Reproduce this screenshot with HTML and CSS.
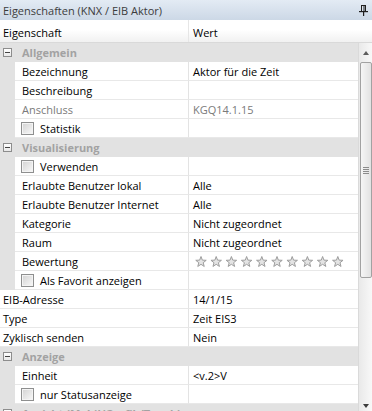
FILE: index.html
```html
<!DOCTYPE html>
<html lang="de">
<head>
  <meta charset="UTF-8" />
  <title>Eigenschaften</title>
  <link rel="stylesheet" href="styles.css">
</head>
<body>
  <div class="panel">
    <div class="titlebar">
      <span>Eigenschaften (KNX / EIB Aktor)</span>
      <svg class="pin" width="9" height="11" viewBox="0 0 9 11">
        <rect x="2.5" y="0.5" width="4" height="6" fill="none" stroke="#1e1e1e"/>
        <rect x="4.5" y="1" width="1" height="5" fill="#1e1e1e"/>
        <rect x="0" y="6" width="9" height="1.2" fill="#1e1e1e"/>
        <rect x="4" y="7" width="1.2" height="4" fill="#1e1e1e"/>
      </svg>
    </div>
    <div class="head">
      <div class="c1">Eigenschaft</div>
      <div class="c2">Wert</div>
    </div>
    <div class="body">
      <div class="grid">
        <div class="group"><span class="tog"></span>Allgemein</div>
        <div class="row sub"><div class="c1">Bezeichnung</div><div class="c2">Aktor für die Zeit</div></div>
        <div class="row sub"><div class="c1">Beschreibung</div><div class="c2"></div></div>
        <div class="row sub off"><div class="c1">Anschluss</div><div class="c2">KGQ14.1.15</div></div>
        <div class="row sub"><div class="c1"><span class="check"></span>Statistik</div><div class="c2"></div></div>

        <div class="group"><span class="tog"></span>Visualisierung</div>
        <div class="row sub"><div class="c1"><span class="check"></span>Verwenden</div><div class="c2"></div></div>
        <div class="row sub"><div class="c1">Erlaubte Benutzer lokal</div><div class="c2">Alle</div></div>
        <div class="row sub"><div class="c1">Erlaubte Benutzer Internet</div><div class="c2">Alle</div></div>
        <div class="row sub"><div class="c1">Kategorie</div><div class="c2">Nicht zugeordnet</div></div>
        <div class="row sub"><div class="c1">Raum</div><div class="c2">Nicht zugeordnet</div></div>
        <div class="row sub"><div class="c1">Bewertung</div>
          <div class="c2">
            <svg class="stars" width="152" height="13" viewBox="0 0 152 13">
              <defs>
                <path id="star" d="M0,-5.5 L1.35,-1.86 L5.23,-1.7 L2.19,0.71 L3.23,4.45 L0,2.3 L-3.23,4.45 L-2.19,0.71 L-5.23,-1.7 L-1.35,-1.86 Z" fill="#e4e4e4" stroke="#9d9d9d" stroke-width="1" stroke-linejoin="round"/>
              </defs>
              <use href="#star" x="8" y="7"/>
              <use href="#star" x="23.2" y="7"/>
              <use href="#star" x="38.4" y="7"/>
              <use href="#star" x="53.6" y="7"/>
              <use href="#star" x="68.8" y="7"/>
              <use href="#star" x="84" y="7"/>
              <use href="#star" x="99.2" y="7"/>
              <use href="#star" x="114.4" y="7"/>
              <use href="#star" x="129.6" y="7"/>
              <use href="#star" x="144.8" y="7"/>
            </svg>
          </div>
        </div>
        <div class="row sub"><div class="c1"><span class="check"></span>Als Favorit anzeigen</div><div class="c2"></div></div>

        <div class="row"><div class="c1">EIB-Adresse</div><div class="c2">14/1/15</div></div>
        <div class="row"><div class="c1">Type</div><div class="c2">Zeit EIS3</div></div>
        <div class="row"><div class="c1">Zyklisch senden</div><div class="c2">Nein</div></div>

        <div class="group"><span class="tog"></span>Anzeige</div>
        <div class="row sub"><div class="c1">Einheit</div><div class="c2">&lt;v.2&gt;V</div></div>
        <div class="row sub"><div class="c1"><span class="check"></span>nur Statusanzeige</div><div class="c2"></div></div>

        <div class="group"><span class="tog"></span>Ansicht (Mobil/Grafik/Touch)</div>
      </div>
      <div class="scrollbar">
        <div class="sb-btn"><span class="arrow-up"></span></div>
        <div class="thumb"><span class="grip"></span></div>
        <div class="sb-track"></div>
        <div class="sb-btn down"><span class="arrow-down"></span></div>
      </div>
    </div>
  </div>
</body>
</html>
```

FILE: styles.css
```css
body {
  margin: 0;
  font-family: "Open Sans", "Noto Sans", sans-serif;
  font-size: 11px;
  color: #000;
  background: #fff;
}
.panel {
  width: 372px;
  height: 411px;
  overflow: hidden;
}
.titlebar {
  height: 20px;
  box-sizing: border-box;
  padding: 0 4px 0 3px;
  display: flex;
  align-items: center;
  justify-content: space-between;
  background: linear-gradient(#e3ebf4, #ccd8e6);
  color: #3c3c3c;
}
.head {
  display: flex;
  height: 23px;
  box-sizing: border-box;
  background: linear-gradient(#fff 45%, #f1f1f1);
  border-bottom: 1px solid #d9d9d9;
  align-items: stretch;
}
.head .c1 {
  width: 189px;
  box-sizing: border-box;
  padding: 3px 0 0 3px;
  border-right: 1px solid #e6e6e6;
  display: flex;
  align-items: center;
}
.head .c2 {
  padding: 3px 0 0 4px;
  display: flex;
  align-items: center;
}
.body {
  display: flex;
}
.grid {
  flex: 1;
  border-right: 1px solid #dadada;
}
.group {
  height: 19px;
  display: flex;
  align-items: center;
  background: #e2e2e2;
  color: #a2a2a2;
  font-weight: bold;
}
.tog {
  width: 9px;
  height: 9px;
  box-sizing: border-box;
  margin: 0 10px 0 3px;
  border: 1px solid #8d8d8d;
  background: linear-gradient(#fff, #e8e8e8);
  position: relative;
}
.tog::after {
  content: "";
  position: absolute;
  left: 1px;
  top: 3px;
  width: 5px;
  height: 1px;
  background: #444;
}
.row {
  height: 19px;
  display: flex;
  background: #fff;
}
.row .c1, .row .c2 {
  box-sizing: border-box;
  border-bottom: 1px solid #e8e8e8;
  display: flex;
  align-items: center;
  white-space: nowrap;
}
.row .c1 {
  width: 189px;
  padding-left: 3px;
  border-right: 1px solid #e3e3e3;
}
.row .c2 {
  flex: 1;
  padding-left: 4px;
}
.row.sub {
  border-left: 15px solid #e2e2e2;
}
.row.sub .c1 {
  width: 174px;
  padding-left: 7px;
}
.row.off {
  color: #7a7a7a;
}
.check {
  width: 13px;
  height: 13px;
  box-sizing: border-box;
  margin: 0 6px 0 -1px;
  border: 1px solid #8e8f8f;
  box-shadow: inset 0 0 0 1px #f4f4f4;
  background: linear-gradient(135deg, #d2d2d2, #f9f9f9);
}
.stars {
  display: block;
}
.scrollbar {
  width: 13px;
  display: flex;
  flex-direction: column;
  align-items: center;
  background: linear-gradient(90deg, #e9e9e9, #f8f8f8);
}
.sb-btn {
  height: 19px;
  width: 100%;
  display: flex;
  justify-content: center;
  align-items: center;
}
.sb-btn.down {
  align-items: flex-start;
  padding-top: 6px;
}
.arrow-up {
  width: 0;
  height: 0;
  border-left: 3.5px solid transparent;
  border-right: 3.5px solid transparent;
  border-bottom: 4px solid #5c5c5c;
}
.arrow-down {
  width: 0;
  height: 0;
  border-left: 3.5px solid transparent;
  border-right: 3.5px solid transparent;
  border-top: 4px solid #3c3c3c;
}
.thumb {
  width: 12px;
  height: 216px;
  box-sizing: border-box;
  border: 1px solid #a2a2a2;
  border-radius: 2px;
  background: linear-gradient(90deg, #f6f6f6, #e2e2e2);
  display: flex;
  justify-content: center;
  align-items: center;
}
.grip {
  width: 6px;
  height: 7px;
  background: repeating-linear-gradient(#8c8c8c 0 1px, transparent 1px 2px);
}
.sb-track {
  flex: 1;
}
```
